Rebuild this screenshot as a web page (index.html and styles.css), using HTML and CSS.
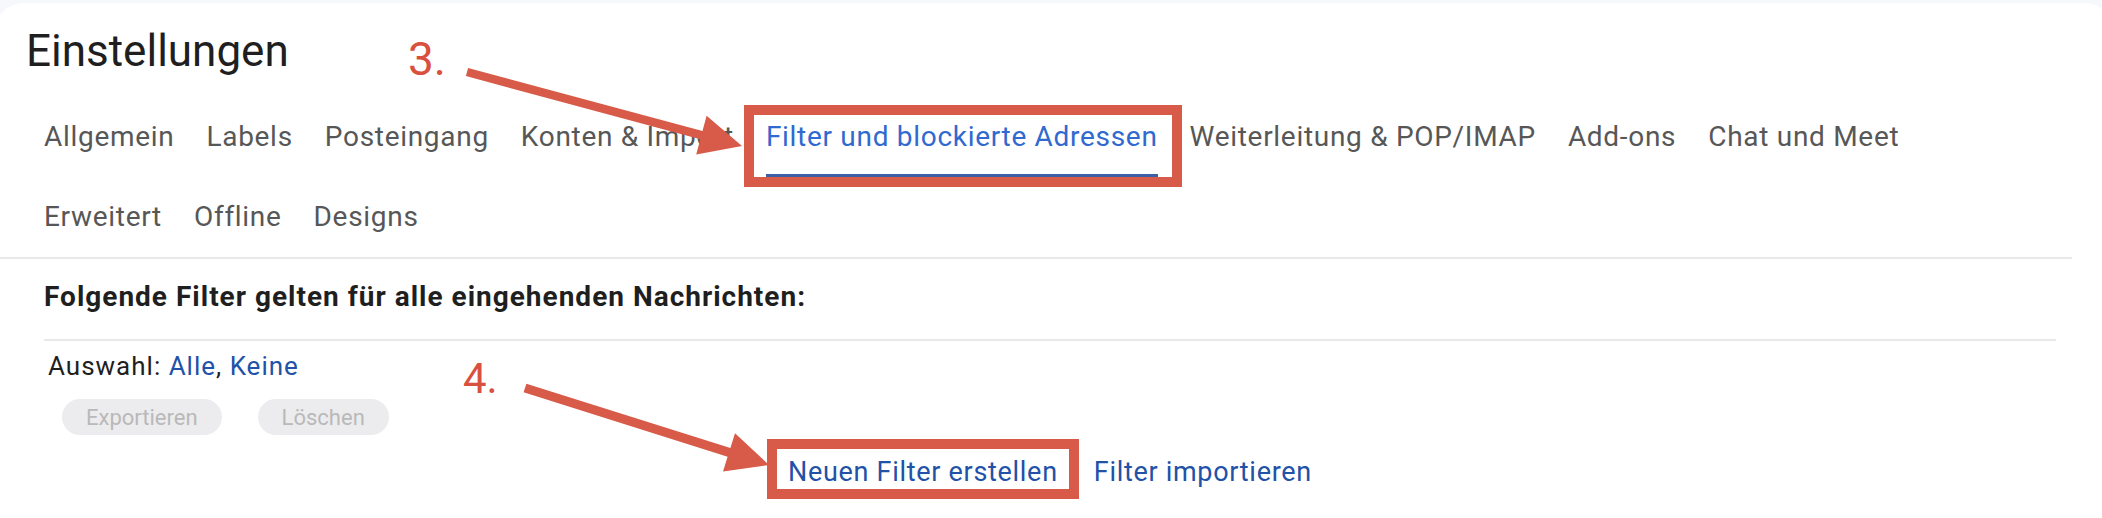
FILE: index.html
```html
<!DOCTYPE html>
<html lang="de">
<head>
<meta charset="utf-8">
<title>Einstellungen – Filter</title>
<link rel="stylesheet" href="styles.css">
</head>
<body>
<div class="card">
  <h1 class="title">Einstellungen</h1>
  <nav class="tabs">
    <div class="tab-row">
      <a class="tab">Allgemein</a>
      <a class="tab">Labels</a>
      <a class="tab">Posteingang</a>
      <a class="tab">Konten &amp; Import</a>
      <a class="tab active">Filter und blockierte Adressen</a>
      <a class="tab">Weiterleitung &amp; POP/IMAP</a>
      <a class="tab">Add-ons</a>
      <a class="tab">Chat und Meet</a>
    </div>
    <div class="tab-row">
      <a class="tab">Erweitert</a>
      <a class="tab">Offline</a>
      <a class="tab">Designs</a>
    </div>
  </nav>
  <section class="filters">
    <div class="filters-head">Folgende Filter gelten für alle eingehenden Nachrichten:</div>
    <div class="select-line">Auswahl: <a class="link">Alle</a>, <a class="link">Keine</a></div>
    <div class="actions">
      <button class="pill">Exportieren</button>
      <button class="pill">Löschen</button>
    </div>
    <div class="create-line">
      <a class="link">Neuen Filter erstellen</a>
      <a class="link">Filter importieren</a>
    </div>
  </section>
</div>

<div class="annot">
  <svg class="annot-svg" width="2102" height="518" viewBox="0 0 2102 518">
    <rect x="749" y="110" width="428" height="72" fill="none" stroke="#d85a48" stroke-width="10"/>
    <rect x="772" y="444" width="302" height="50" fill="none" stroke="#d85a48" stroke-width="10"/>
    <polygon fill="#d85a48" points="468.1,67.9 702.5,131.0 706.6,115.8 742,146 696.2,154.4 700.3,139.2 465.9,76.1"/>
    <polygon fill="#d85a48" points="526.4,383.7 730.4,448.1 735.0,433.3 769,465 723.0,471.5 727.6,456.7 523.6,392.3"/>
  </svg>
  <span class="step step-3">3.</span>
  <span class="step step-4">4.</span>
</div>
</body>
</html>
```

FILE: styles.css
```css
html, body {
  margin: 0;
  padding: 0;
}
body {
  width: 2102px;
  height: 518px;
  overflow: hidden;
  background: #f6f8fc;
  font-family: Roboto, "Noto Sans", Arial, sans-serif;
  position: relative;
}

.card {
  margin: 3px -12px 0 -6px;
  height: 515px;
  background: #ffffff;
  border-radius: 30px 30px 0 0;
}

.title {
  margin: 0;
  padding: 22px 0 0 32px;
  font-weight: 400;
  font-size: 44px;
  line-height: 52px;
  color: #1f1f1f;
}

.tabs {
  margin: 20px 42px 0 0;
  padding-left: 34px;
  border-bottom: 2px solid #e9e9e9;
}
.tab-row {
  display: flex;
  height: 80px;
}
.tab {
  margin: 0 16px;
  padding: 23px 0;
  font-size: 28px;
  line-height: 34px;
  letter-spacing: 0.7px;
  color: #575757;
  white-space: nowrap;
}
.tab.active {
  color: #3069cf;
  padding-bottom: 20px;
  border-bottom: 3px solid #3d5fa6;
}

.filters {
  margin-right: 58px;
  padding-left: 50px;
}
.filters-head {
  padding: 21px 0 25px;
  border-bottom: 2px solid #e9e9e9;
  font-weight: 700;
  font-size: 28px;
  line-height: 34px;
  letter-spacing: 1px;
  color: #1f1f1f;
}
.select-line {
  margin-top: 8px;
  padding-left: 4px;
  font-size: 26px;
  line-height: 34px;
  letter-spacing: 1px;
  color: #1f1f1f;
}
.link {
  color: #2251a8;
}
.actions {
  display: flex;
  gap: 36px;
  margin-top: 16px;
  padding-left: 18px;
}
.pill {
  height: 36px;
  padding: 0 24px;
  border: none;
  border-radius: 18px;
  background: #ececee;
  color: #b9b9b9;
  font-family: Roboto, "Noto Sans", Arial, sans-serif;
  font-size: 22px;
}
.create-line {
  display: flex;
  gap: 36px;
  margin-top: 20px;
  padding-left: 744px;
  font-size: 27px;
  line-height: 34px;
  letter-spacing: 0.7px;
}

.annot {
  position: absolute;
  left: 0;
  top: 0;
  width: 2102px;
  height: 518px;
  pointer-events: none;
}
.annot-svg {
  display: block;
}
.step {
  position: absolute;
  font-family: Roboto, Arial, sans-serif;
  color: #d9503f;
  line-height: 1;
}
.step-3 {
  left: 408px;
  top: 36px;
  font-size: 46px;
}
.step-4 {
  left: 463px;
  top: 358px;
  font-size: 42px;
}
```
